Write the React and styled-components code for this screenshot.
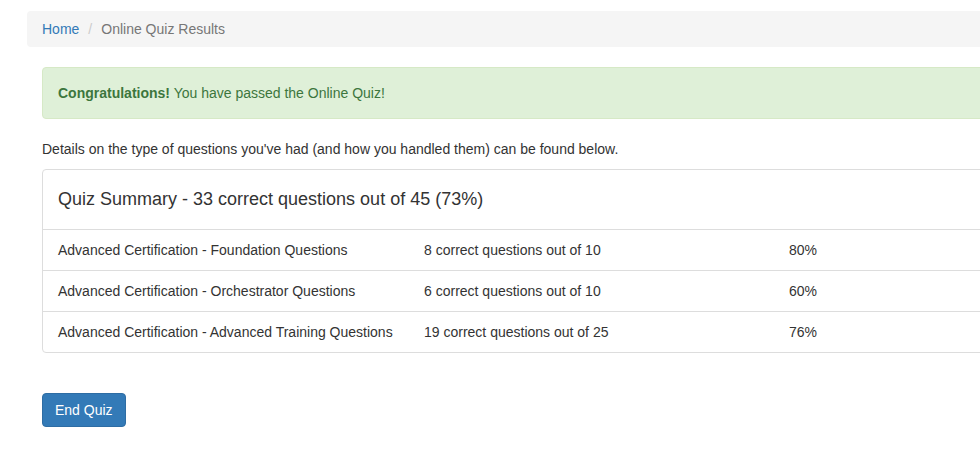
import React from 'react';
import styled, { createGlobalStyle } from 'styled-components';

const GlobalStyle = createGlobalStyle`
  html, body {
    margin: 0;
    padding: 0;
    background: #fff;
    overflow: hidden;
  }
  body {
    font-family: "Liberation Sans", Arial, Helvetica, sans-serif;
    font-size: 14px;
    line-height: 20px;
    color: #333;
  }
`;

const Page = styled.div`
  width: 1200px;
  padding: 11px 0 0 27px;
`;

const Breadcrumb = styled.ol`
  list-style: none;
  margin: 0 0 20px;
  padding: 8px 15px;
  background-color: #f5f5f5;
  border-radius: 4px;
  display: flex;
`;

const Crumb = styled.li`
  color: ${({ $active }) => ($active ? '#777' : '#337ab7')};
`;

const Separator = styled.li`
  padding: 0 9px;
  color: #ccc;
`;

const CrumbLink = styled.a`
  color: #337ab7;
  text-decoration: none;
`;

const Container = styled.div`
  width: 1140px;
  padding-left: 15px;
`;

const Alert = styled.div`
  padding: 15px;
  margin-bottom: 20px;
  border: 1px solid #d6e9c6;
  border-radius: 4px;
  background-color: #dff0d8;
  color: #3c763d;
`;

const Intro = styled.p`
  margin: 0 0 10px;
`;

const Panel = styled.div`
  border: 1px solid #ddd;
  border-radius: 4px;
  background: #fff;
  margin-bottom: 40px;
`;

const PanelHeading = styled.div`
  padding: 19px 15px 20px;
  border-bottom: 1px solid #ddd;
`;

const PanelTitle = styled.h3`
  margin: 0;
  font-size: 18px;
  font-weight: 400;
  line-height: 20px;
  color: #333;
`;

const Row = styled.div`
  display: grid;
  grid-template-columns: 366px 365px 1fr;
  border-top: ${({ $first }) => ($first ? 'none' : '1px solid #ddd')};
`;

const Cell = styled.div`
  padding: 10px 15px;
  white-space: nowrap;
`;

const Button = styled.button`
  font-family: inherit;
  font-size: 14px;
  line-height: 20px;
  padding: 6px 12px;
  color: #fff;
  background-color: #337ab7;
  border: 1px solid #2e6da4;
  border-radius: 4px;
  cursor: pointer;
`;

const results = [
  { name: 'Advanced Certification - Foundation Questions', correct: 8, total: 10 },
  { name: 'Advanced Certification - Orchestrator Questions', correct: 6, total: 10 },
  { name: 'Advanced Certification - Advanced Training Questions', correct: 19, total: 25 },
];

const App = () => {
  return (
    <>
      <GlobalStyle />
      <Page>
        <Breadcrumb>
          <Crumb>
            <CrumbLink href="#">Home</CrumbLink>
          </Crumb>
          <Separator aria-hidden="true">/</Separator>
          <Crumb $active>Online Quiz Results</Crumb>
        </Breadcrumb>
        <Container>
          <Alert>
            <strong>Congratulations!</strong> You have passed the Online Quiz!
          </Alert>
          <Intro>Details on the type of questions you've had (and how you handled them) can be found below.</Intro>
          <Panel>
            <PanelHeading>
              <PanelTitle>Quiz Summary - 33 correct questions out of 45 (73%)</PanelTitle>
            </PanelHeading>
            {results.map((r, i) => (
              <Row key={r.name} $first={i === 0}>
                <Cell>{r.name}</Cell>
                <Cell>
                  {r.correct} correct questions out of {r.total}
                </Cell>
                <Cell>{Math.round((r.correct / r.total) * 100)}%</Cell>
              </Row>
            ))}
          </Panel>
          <Button>End Quiz</Button>
        </Container>
      </Page>
    </>
  );
};

export default App;
